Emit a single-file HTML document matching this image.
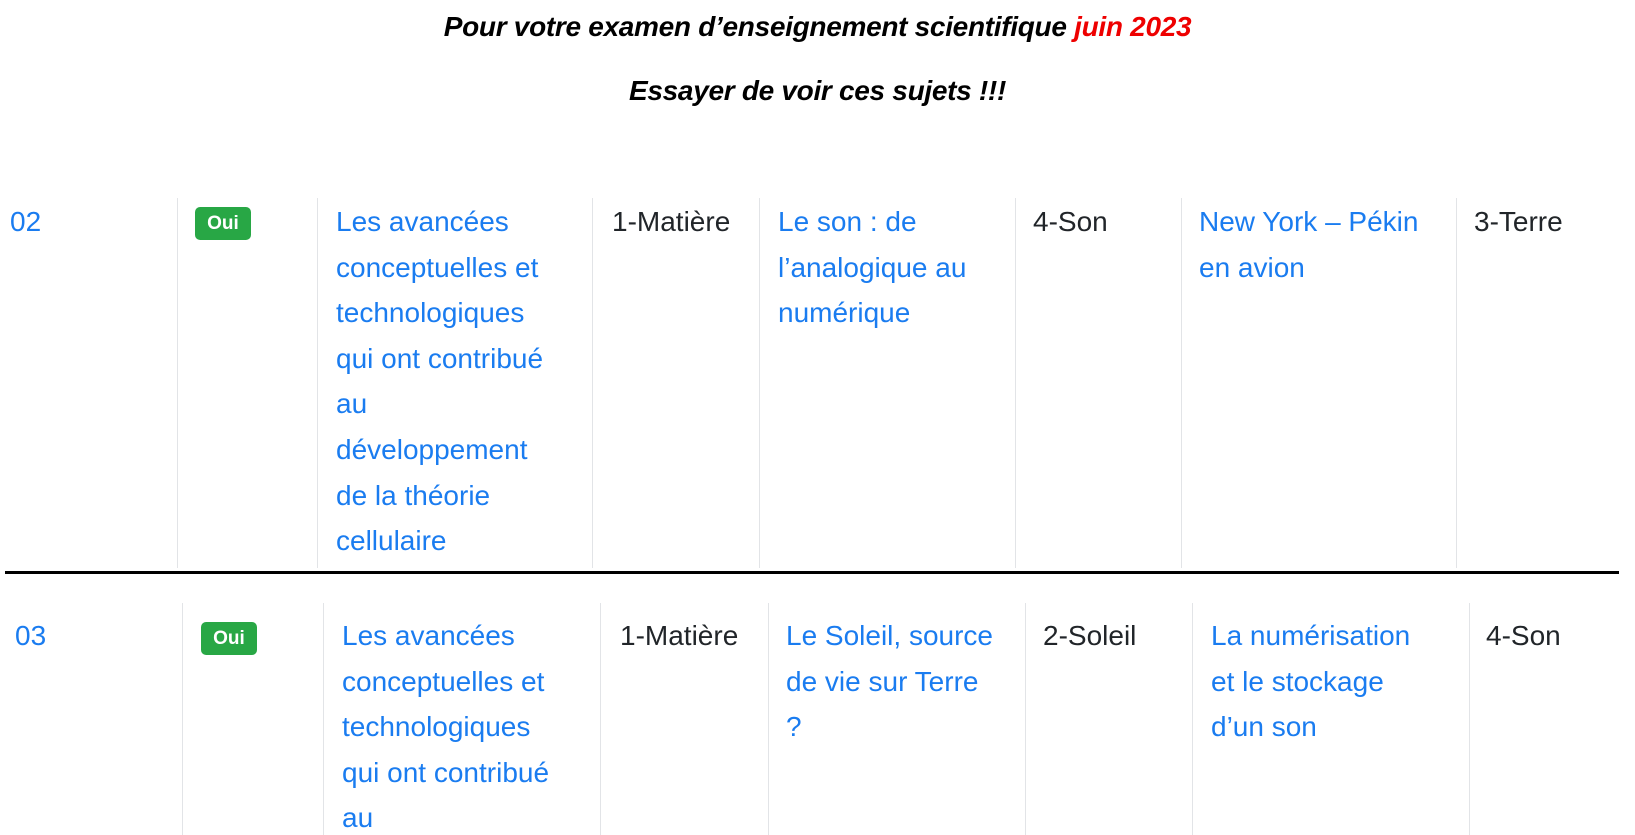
<!DOCTYPE html>
<html><head><meta charset="utf-8"><style>
html,body{margin:0;padding:0;background:#fff;width:1635px;height:835px;overflow:hidden;position:relative;font-family:"Liberation Sans",Arial,sans-serif;}
.t{position:absolute;left:0;width:1635px;text-align:center;font-weight:bold;font-style:italic;font-size:28px;color:#000;letter-spacing:-0.3px;}
.c{position:absolute;font-size:28px;line-height:45.6px;white-space:nowrap;color:#212529;}
.b{color:#1a7cf0;}
.v{position:absolute;width:1px;background:#e2e4e7;}
.badge{position:absolute;background:#28a745;color:#fff;font-weight:bold;font-size:19px;border-radius:5px;text-align:center;line-height:33px;width:56px;height:33px;}
</style></head><body>
<div class="t" style="top:11px">Pour votre examen d’enseignement scientifique <span style="color:#e00">juin 2023</span></div>
<div class="t" style="top:75px">Essayer de voir ces sujets !!!</div>

<!-- row 1 -->
<div class="v" style="left:177px;top:198px;height:370px"></div>
<div class="v" style="left:317px;top:198px;height:370px"></div>
<div class="v" style="left:592px;top:198px;height:370px"></div>
<div class="v" style="left:759px;top:198px;height:370px"></div>
<div class="v" style="left:1015px;top:198px;height:370px"></div>
<div class="v" style="left:1181px;top:198px;height:370px"></div>
<div class="v" style="left:1456px;top:198px;height:370px"></div>
<div class="c b" style="left:10px;top:199px">02</div>
<div class="badge" style="left:195px;top:207px">Oui</div>
<div class="c b" style="left:336px;top:199px">Les avancées<br>conceptuelles et<br>technologiques<br>qui ont contribué<br>au<br>développement<br>de la théorie<br>cellulaire</div>
<div class="c" style="left:612px;top:199px">1-Matière</div>
<div class="c b" style="left:778px;top:199px">Le son : de<br>l’analogique au<br>numérique</div>
<div class="c" style="left:1033px;top:199px">4-Son</div>
<div class="c b" style="left:1199px;top:199px">New York – Pékin<br>en avion</div>
<div class="c" style="left:1474px;top:199px">3-Terre</div>

<div style="position:absolute;left:5px;top:571px;width:1614px;height:3px;background:#000"></div>

<!-- row 2 -->
<div class="v" style="left:182px;top:603px;height:232px"></div>
<div class="v" style="left:323px;top:603px;height:232px"></div>
<div class="v" style="left:600px;top:603px;height:232px"></div>
<div class="v" style="left:768px;top:603px;height:232px"></div>
<div class="v" style="left:1025px;top:603px;height:232px"></div>
<div class="v" style="left:1192px;top:603px;height:232px"></div>
<div class="v" style="left:1469px;top:603px;height:232px"></div>
<div class="c b" style="left:15px;top:613px">03</div>
<div class="badge" style="left:201px;top:622px">Oui</div>
<div class="c b" style="left:342px;top:613px">Les avancées<br>conceptuelles et<br>technologiques<br>qui ont contribué<br>au</div>
<div class="c" style="left:620px;top:613px">1-Matière</div>
<div class="c b" style="left:786px;top:613px">Le Soleil, source<br>de vie sur Terre<br>?</div>
<div class="c" style="left:1043px;top:613px">2-Soleil</div>
<div class="c b" style="left:1211px;top:613px">La numérisation<br>et le stockage<br>d’un son</div>
<div class="c" style="left:1486px;top:613px">4-Son</div>
</body></html>
